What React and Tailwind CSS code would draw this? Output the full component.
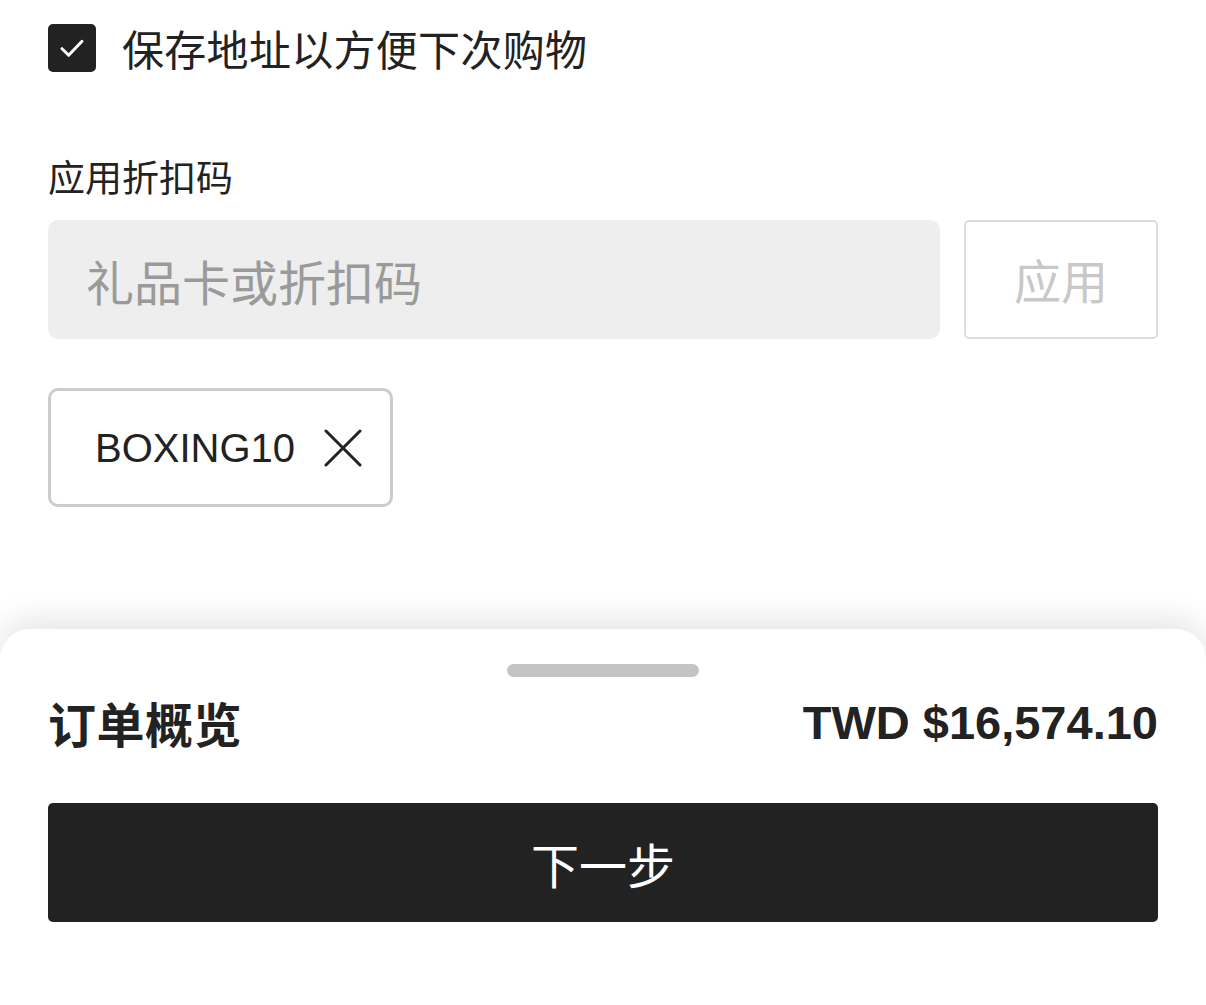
import React, { useState } from 'react';

const cjk = { fontFamily: '"Noto Sans CJK SC", "Noto Sans", sans-serif' };
const latin = { fontFamily: '"Liberation Sans", "Noto Sans CJK SC", sans-serif' };

export default function App() {
  const [saveAddress, setSaveAddress] = useState(true);
  const [code, setCode] = useState('');

  return (
    <div className="min-h-[1005px] bg-white text-[#222] flex flex-col" style={cjk}>
      <div className="px-12 pt-6 flex-1">
        <label className="flex items-center gap-[26px] h-12 cursor-pointer">
          <button
            type="button"
            onClick={() => setSaveAddress(!saveAddress)}
            className="w-12 h-12 rounded-[5px] bg-[#222] flex items-center justify-center"
          >
            {saveAddress && (
              <svg width="32" height="32" viewBox="0 0 24 24" fill="none" stroke="white" strokeWidth="2.2" strokeLinecap="round" strokeLinejoin="round">
                <polyline points="4.5 12.5 9.5 17.5 19.5 7" />
              </svg>
            )}
          </button>
          <span className="text-[42px] leading-none tracking-[0.3px]">保存地址以方便下次购物</span>
        </label>

        <div className="mt-[84px] text-[37px] leading-[40px]">应用折扣码</div>

        <div className="mt-6 flex gap-6">
          <input
            value={code}
            onChange={(e) => setCode(e.target.value)}
            placeholder="礼品卡或折扣码"
            className="flex-1 h-[119px] rounded-[10px] bg-[#eeeeee] px-[38px] text-[48px] outline-none placeholder:text-[#9a9a9a]"
            style={cjk}
          />
          <button
            type="button"
            className="w-[194px] h-[119px] rounded-[5px] border-2 border-[#dddddd] text-[47px] text-[#c8c8c8]"
          >
            应用
          </button>
        </div>

        <div className="mt-[49px] inline-flex items-center h-[119px] w-[345px] rounded-[10px] border-[3px] border-[#cccccc] pl-[44px] gap-[29px]">
          <span className="text-[40px] leading-none" style={latin}>BOXING10</span>
          <svg width="38" height="38" viewBox="0 0 38 38" fill="none" stroke="#222" strokeWidth="3" strokeLinecap="round">
            <line x1="2" y1="2" x2="36" y2="36" />
            <line x1="36" y1="2" x2="2" y2="36" />
          </svg>
        </div>
      </div>

      <div className="mt-[122px] rounded-t-[30px] bg-white shadow-[0_-10px_30px_rgba(0,0,0,0.10)] px-12 pt-[35px] pb-[83px]">
        <div className="mx-auto w-48 h-[13px] rounded-full bg-[#c4c4c4]" />
        <div className="mt-5 flex items-center justify-between h-[50px]">
          <span className="text-[48px] font-bold leading-none tracking-[0.5px]">订单概览</span>
          <span className="text-[47px] font-bold leading-none" style={latin}>TWD $16,574.10</span>
        </div>
        <button
          type="button"
          className="mt-[56px] w-full h-[119px] rounded-[5px] bg-[#222] text-white text-[48px]"
        >
          下一步
        </button>
      </div>
    </div>
  );
}
